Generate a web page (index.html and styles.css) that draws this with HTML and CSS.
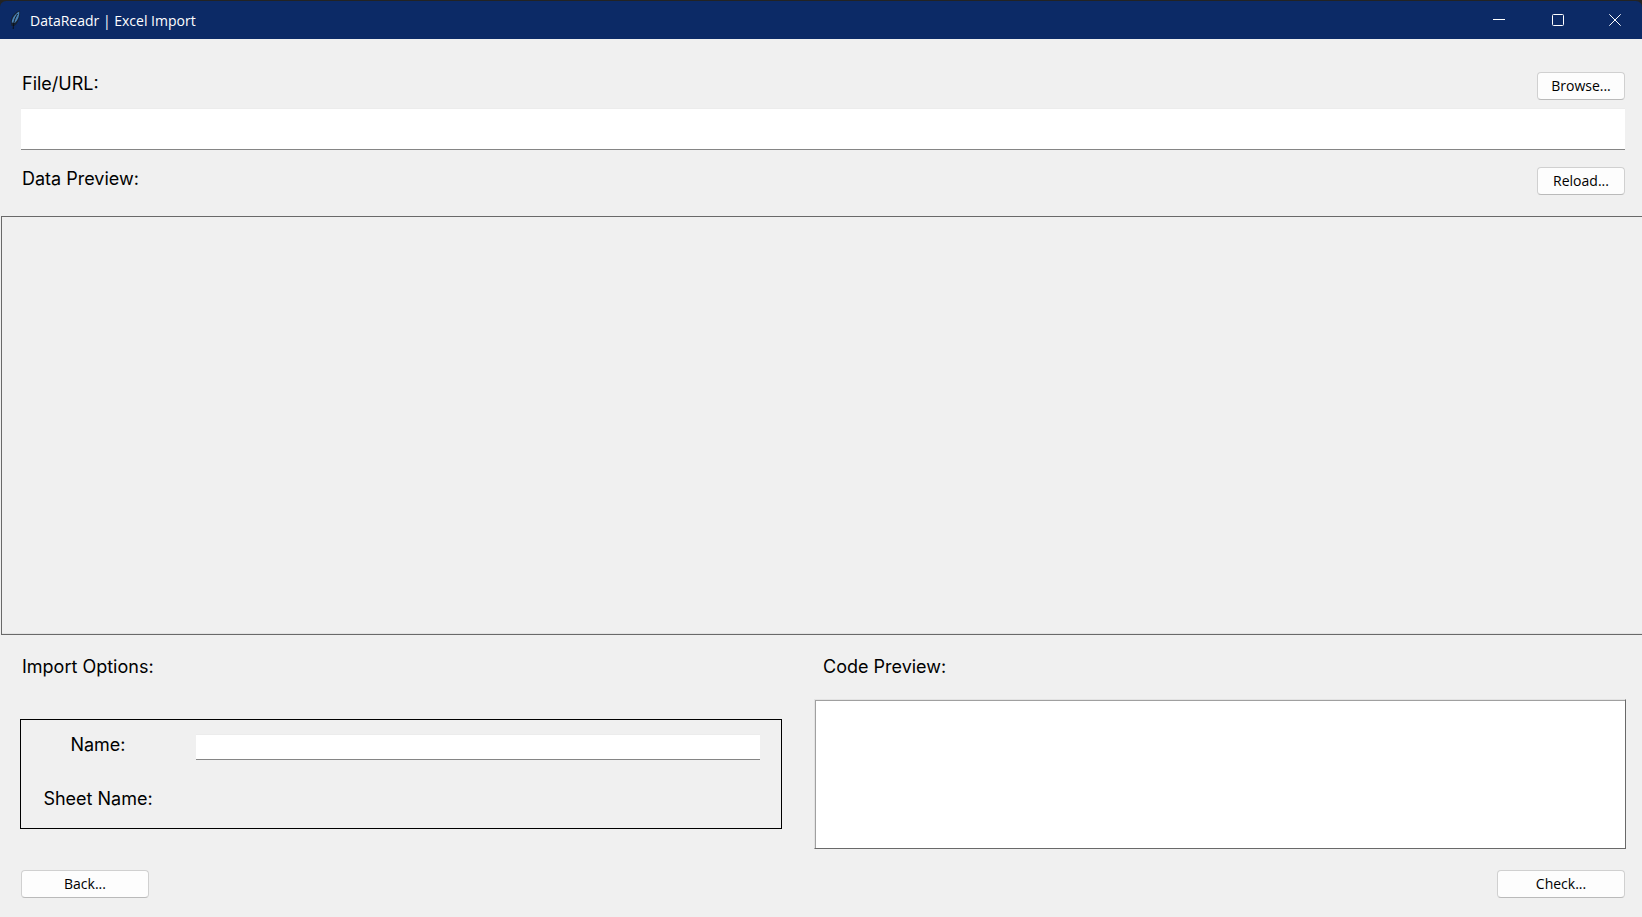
FILE: index.html
```html
<!DOCTYPE html>
<html lang="en">
<head>
<meta charset="utf-8">
<title>DataReadr | Excel Import</title>
<link rel="stylesheet" href="styles.css">
</head>
<body>
<div class="window">
  <header class="titlebar">
    <svg class="feather" width="12" height="20" viewBox="0 0 12 20" aria-hidden="true">
      <path d="M10 0.500C6 1.500 1 6 .8 11.500L1.500 16H4.500C9 12.500 10.500 5 10 .5Z" fill="#152235"/>
      <path d="M9.300 1.500C5.500 3.500 1.800 8 1.800 12.500L4.800 13C8 10 9.500 6 9.300 1.500Z" fill="#4a82b5"/>
      <path d="M7.500 4C5 8 3.400 12 3.200 19" fill="none" stroke="#0a0f18"/>
    </svg>
    <h1 class="title">DataReadr | Excel Import</h1>
    <div class="controls">
      <button class="control" type="button" aria-label="Minimize"><svg width="12" height="12" viewBox="0 0 12 12"><path d="M0 5.500H12"/></svg></button>
      <button class="control" type="button" aria-label="Maximize"><svg width="12" height="12" viewBox="0 0 12 12"><rect x=".5" y=".5" width="11" height="11" rx="1"/></svg></button>
      <button class="control" type="button" aria-label="Close"><svg width="12" height="12" viewBox="0 0 12 12"><path d="M.3.3 11.700 11.700M11.700.3.3 11.700"/></svg></button>
    </div>
  </header>
  <main class="content">
    <section class="source">
      <div class="row">
        <label class="label" for="file">File/URL:</label>
        <button class="button" type="button">Browse...</button>
      </div>
      <input class="field field-large" id="file" type="text">
      <div class="row">
        <h2 class="label">Data Preview:</h2>
        <button class="button" type="button">Reload...</button>
      </div>
    </section>
    <section class="preview" aria-label="Data preview"></section>
    <section class="details">
      <h2 class="label">Import Options:</h2>
      <label class="label label-code" for="code">Code Preview:</label>
      <div class="options">
        <label class="label option-label" for="name">Name:</label>
        <input class="field" id="name" type="text">
        <span class="label option-label">Sheet Name:</span>
      </div>
      <textarea class="code" id="code"></textarea>
    </section>
    <footer class="actions">
      <button class="button button-wide" type="button">Back...</button>
      <button class="button button-wide" type="button">Check...</button>
    </footer>
  </main>
</div>
</body>
</html>
```
FILE: styles.css
```css
* {
  box-sizing: border-box;
}

body {
  margin: 0;
  background: #232323;
  color: #000;
  font: 14px/20px "Open Sans", "Noto Sans", sans-serif;
}

.window {
  display: flex;
  flex-direction: column;
  min-height: 100vh;
  padding-top: 1px;
}

.titlebar {
  display: flex;
  align-items: center;
  height: 38px;
  padding-left: 10px;
  border-radius: 6px 6px 0 0;
  background: #0c2a66;
  color: #fff;
}

.title {
  margin: 0 0 0 8px;
  padding-top: 2px;
  font-size: 14px;
  font-weight: 400;
}

.controls {
  display: flex;
  align-self: stretch;
  margin-left: auto;
}

.control {
  display: grid;
  place-items: center;
  width: 60px;
  padding: 0;
  border: 0;
  background: none;
}

.control:first-child {
  width: 58px;
}

.control:last-child {
  width: 54px;
}

.control svg {
  fill: none;
  stroke: #fff;
}

.content {
  display: flex;
  flex: 1;
  flex-direction: column;
  background: #f0f0f0;
}

.source {
  padding: 33px 17px 21px 21px;
}

.row {
  display: flex;
  align-items: flex-start;
  justify-content: space-between;
}

.label {
  margin: 0;
  padding-left: 1px;
  font: 400 18px/24px Inter, sans-serif;
}

.button {
  width: 88px;
  height: 28px;
  padding: 0;
  border: 1px solid #d0d0d0;
  border-bottom-color: #bababa;
  border-radius: 4px;
  background: #fdfdfd;
  color: #000;
  font: inherit;
}

.button-wide {
  width: 128px;
}

.field {
  width: 100%;
  height: 26px;
  padding: 0 6px;
  border: 0 solid #ececec;
  border-width: 1px 0;
  border-bottom-color: #858585;
  border-radius: 0;
  background: #fff;
  font: inherit;
}

.field-large {
  display: block;
  height: 42px;
  margin: 8px 0 17px;
}

.preview {
  flex: 1;
  min-height: 120px;
  margin-left: 1px;
  border: solid #696969;
  border-width: 1px 0 1px 1px;
  box-shadow: inset 0 -1px #e3e3e3;
}

.details {
  display: grid;
  grid-template-columns: 762fr 812fr;
  column-gap: 32px;
  row-gap: 20px;
  align-items: center;
  padding: 20px 16px 21px 20px;
}

.details > .label {
  padding-left: 2px;
}

.details > .label-code {
  padding-left: 9px;
}

.options {
  display: grid;
  grid-template-columns: 154px 1fr;
  grid-auto-rows: 54px;
  column-gap: 21px;
  align-items: center;
  padding-right: 21px;
  border: 1px solid #000;
}

.options > .option-label {
  padding: 0 0 4px;
  text-align: center;
}

.code {
  display: block;
  width: 100%;
  height: 150px;
  padding: 4px;
  border: 1px solid #e3e3e3;
  border-right-color: #696969;
  border-bottom-color: #696969;
  box-shadow: inset 1px 1px #a0a0a0;
  background: #fff;
  font: 14px/20px "Liberation Mono", monospace;
  resize: none;
}

.actions {
  display: flex;
  justify-content: space-between;
  padding: 0 17px 19px 21px;
}
```
